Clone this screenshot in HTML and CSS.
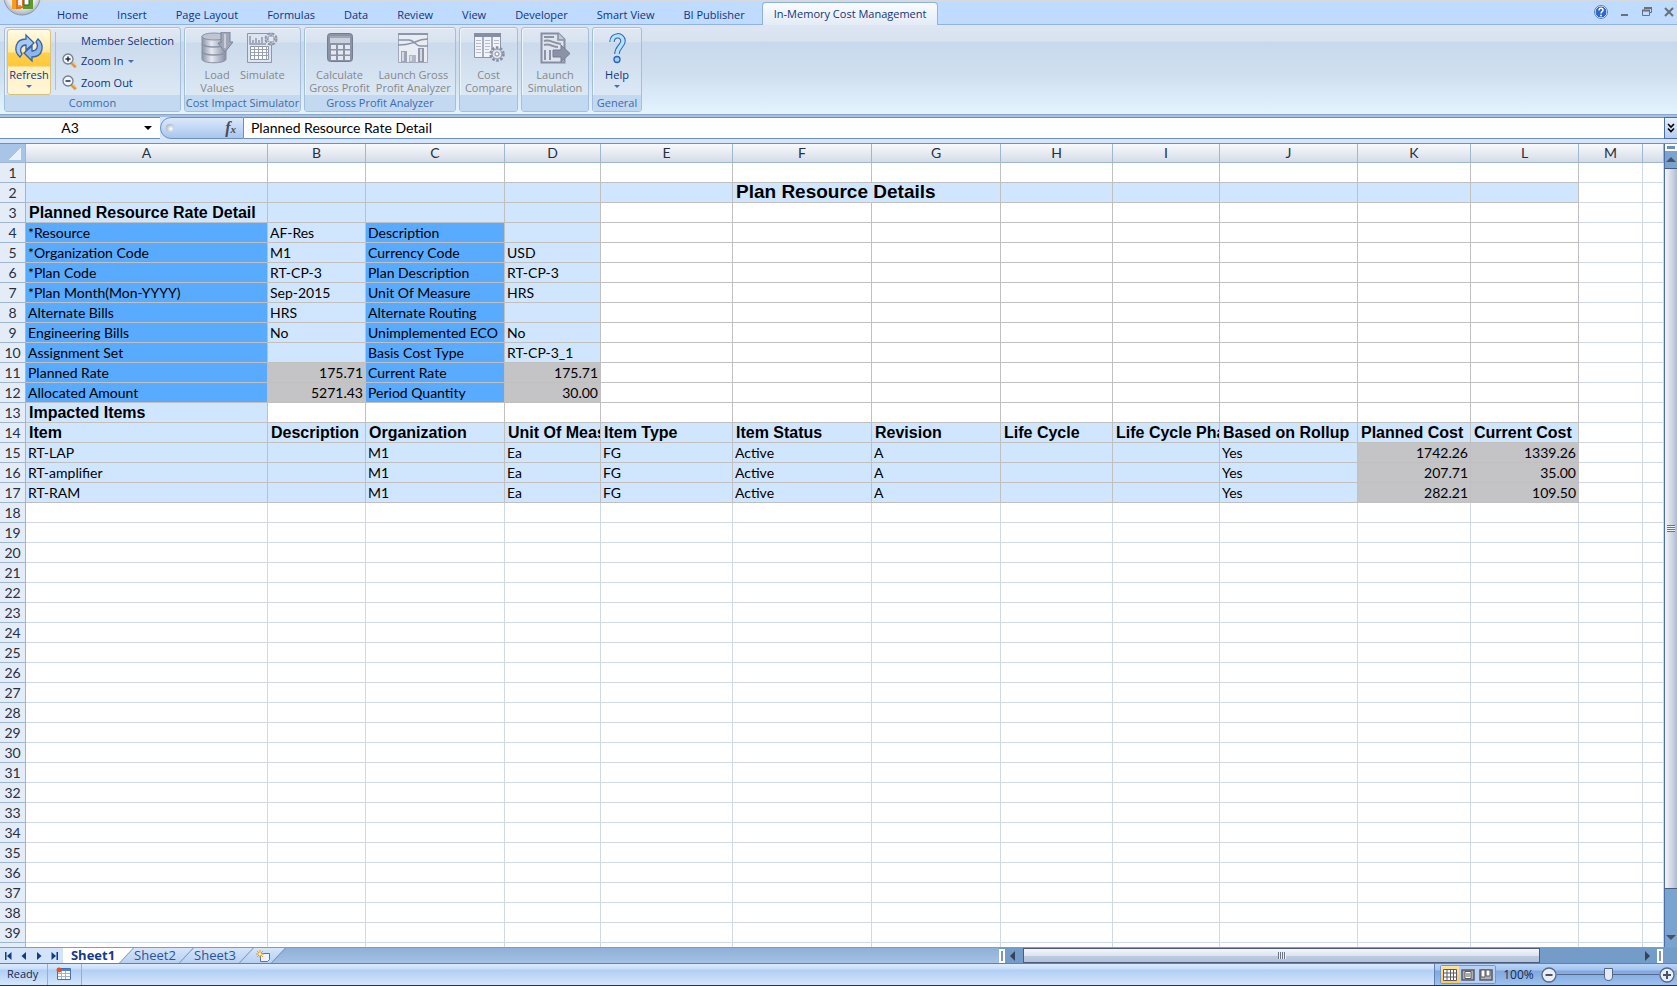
FILE: index.html
```html
<!DOCTYPE html>
<html lang="en">
<head>
  <meta charset="UTF-8">
  <title>Plan Resource Details</title>
  <link rel="stylesheet" href="styles.css">
</head>
<body>
  <header class="tab-bar">
    <button class="office-btn" aria-label="Office Button">
      <svg width="38" height="38" viewBox="0 0 38 38">
        <defs>
          <radialGradient id="orb" cx="50%" cy="40%" r="60%">
            <stop offset="0" stop-color="#fff"/>
            <stop offset="0.7" stop-color="#e4e6ea"/>
            <stop offset="1" stop-color="#a9b1bd"/>
          </radialGradient>
        </defs>
        <circle cx="19" cy="19" r="18" fill="url(#orb)" stroke="#8c97a8"/>
        <path d="M9 15h9v4h-5v8h5v4H9z" fill="#f0a01e"/>
        <path d="M14 22l6-4v11l-6 1z" fill="none" stroke="#e2701c" stroke-width="2"/>
        <path d="M20 15h10v16H20v-4h6v-8h-6z" fill="#5c9a2c"/>
        <path d="M21 21h5v6h-5z" fill="#fff" stroke="#2f5f2a"/>
      </svg>
    </button>
    <nav class="tabs">
      <button>Home</button>
      <button>Insert</button>
      <button>Page Layout</button>
      <button>Formulas</button>
      <button>Data</button>
      <button>Review</button>
      <button>View</button>
      <button>Developer</button>
      <button>Smart View</button>
      <button>BI Publisher</button>
      <button class="active">In-Memory Cost Management</button>
    </nav>
    <div class="window-btns">
      <button aria-label="Help">
        <svg width="14" height="14" viewBox="0 0 14 14">
          <circle cx="7" cy="7" r="6" fill="#2f66c8" stroke="#fff"/>
          <circle cx="7" cy="7" r="6.5" fill="none" stroke="#5f7fb0"/>
          <path d="M5 5.500c0-3 4-2.700 4-.3C9 6.800 7 6.500 7 8.500" fill="none" stroke="#fff" stroke-width="1.500"/>
          <circle cx="7" cy="10.500" r="0.900" fill="#fff"/>
        </svg>
      </button>
      <button aria-label="Minimize">
        <svg width="10" height="10" viewBox="0 0 10 10"><path d="M1 8h7" stroke="#6b6f78" stroke-width="2"/></svg>
      </button>
      <button aria-label="Restore">
        <svg width="10" height="10" viewBox="0 0 10 10">
          <path d="M2.500 2.500V1h7v4.500H8" fill="none" stroke="#6b6f78"/>
          <path d="M.5 3.500h7v5h-7z" fill="none" stroke="#6b6f78"/>
          <path d="M0 3.500h8M2 1h8" stroke="#6b6f78" stroke-width="2"/>
        </svg>
      </button>
      <button aria-label="Close">
        <svg width="10" height="10" viewBox="0 0 10 10"><path d="M1 1l8 8M9 1l-8 8" stroke="#6b6f78" stroke-width="2"/></svg>
      </button>
    </div>
  </header>

  <div class="ribbon">
    <section class="group group-common">
      <div class="tools">
        <button class="big refresh">
          <svg width="32" height="32" viewBox="0 0 32 32">
            <path d="M7 25C0 19 2 7 13 7V3l8 8-8 7v-5c-5 0-7 5-4 9z" fill="#a9c9f2" stroke="#3563ad" stroke-width="1.300"/>
            <path d="M25 7c7 6 5 18-6 18v4l-8-8 8-7v5c5 0 7-5 4-9z" fill="#8db6ec" stroke="#3563ad" stroke-width="1.300"/>
          </svg>
          <span>Refresh</span>
          <i class="caret"></i>
        </button>
        <div class="small-tools">
          <button><span class="no-icon"></span>Member Selection</button>
          <button>
            <svg width="16" height="16" viewBox="0 0 16 16">
              <path d="M9 9l5 5" stroke="#e09a34" stroke-width="3.500"/>
              <path d="M9 8l6 5" stroke="#ffe0a0"/>
              <circle cx="6" cy="6" r="5" fill="#f0f6ff" stroke="#76808c" stroke-width="1.300"/>
              <path d="M3.500 6h5M6 3.500v5" stroke="#222b3c" stroke-width="1.500"/>
            </svg>
            Zoom In
            <i class="caret"></i>
          </button>
          <button>
            <svg width="16" height="16" viewBox="0 0 16 16">
              <path d="M9 9l5 5" stroke="#e09a34" stroke-width="3.500"/>
              <path d="M9 8l6 5" stroke="#ffe0a0"/>
              <circle cx="6" cy="6" r="5" fill="#f0f6ff" stroke="#76808c" stroke-width="1.300"/>
              <path d="M3.500 6h5" stroke="#222b3c" stroke-width="1.500"/>
            </svg>
            Zoom Out
          </button>
        </div>
      </div>
      <h2>Common</h2>
    </section>

    <section class="group group-impact">
      <div class="tools">
        <button class="big" disabled>
          <svg width="32" height="32" viewBox="0 0 32 32">
            <defs>
              <linearGradient id="drum">
                <stop offset="0" stop-color="#8b93a6"/>
                <stop offset="0.4" stop-color="#e6e9f0"/>
                <stop offset="1" stop-color="#858da1"/>
              </linearGradient>
            </defs>
            <path d="M1 4v23c0 5 24 5 24 0V4z" fill="url(#drum)" stroke="#8890a2"/>
            <ellipse cx="13" cy="4.500" rx="12" ry="3.500" fill="#bfc5d2" stroke="#8a92a5"/>
            <path d="M1 12c3 4 21 4 24 0M1 20c3 4 21 4 24 0" fill="none" stroke="#8c94a8" stroke-width="1.500"/>
            <path d="M20 0h9v10h3l-8 10-7-9h3z" fill="#a0a7b8" stroke="#7c8498"/>
            <path d="M24 2v14" stroke="#c9ced9" stroke-width="2"/>
          </svg>
          <span>Load<br>Values</span>
        </button>
        <button class="big" disabled>
          <svg width="32" height="32" viewBox="0 0 32 32">
            <path d="M1.500 1.500h24v29h-24z" fill="#dfe5f0" stroke="#8e96aa"/>
            <path d="M4 4v8h16M7 11V8m3 3V6m3 5V8m3 3V5" fill="none" stroke="#8e96aa" stroke-width="1.500"/>
            <path d="M4.500 14.500h18v13h-18z" fill="#fff" stroke="#8e96aa"/>
            <path d="M4 17.500h19M4 20.500h19M4 23.500h19M8.500 14v14m4-14v14m4-14v14m4-14v14" stroke="#9aa1b3"/>
            <circle cx="25" cy="7" r="5.500" fill="#e3e7f0" stroke="#8e96aa" stroke-width="2" stroke-dasharray="3 1.300"/>
            <circle cx="25" cy="7" r="3.500" fill="none" stroke="#8e96aa"/>
            <path d="M25 1v4m0 4v4m-6-6h4m4 0h4" stroke="#8e96aa"/>
          </svg>
          <span>Simulate</span>
        </button>
      </div>
      <h2>Cost Impact Simulator</h2>
    </section>

    <section class="group group-profit">
      <div class="tools">
        <button class="big" disabled>
          <svg width="32" height="32" viewBox="0 0 32 32">
            <rect x="3.500" y="1.500" width="25" height="28" rx="3" fill="#8b93a7" stroke="#747c90"/>
            <path d="M6 4h20v7H6z" fill="#cbd2de"/>
            <path d="M6 5h20" stroke="#747c90"/>
            <path d="M7 13h5v4H7zm7 0h5v4h-5zm7 0h5v4h-5zM7 18.500h5v4H7zm7 0h5v4h-5zm7 0h5v4h-5zM7 24h5v4H7zm7 0h5v4h-5zm7 0h5v4h-5z" fill="#e4e8f0"/>
          </svg>
          <span>Calculate<br>Gross Profit</span>
        </button>
        <button class="big" disabled>
          <svg width="32" height="32" viewBox="0 0 32 32">
            <path d="M1.500 1.500h29v29h-29z" fill="#e8ecf3" stroke="#a2a9ba"/>
            <path d="M1 2h30" stroke="#8e96aa" stroke-width="2"/>
            <path d="M1 8h11c5 0 7 6 11 6h8M1 13c10 0 11-1 17-3 4-2 7-3 13-3" fill="none" stroke="#8b93a7" stroke-width="1.500"/>
            <path d="M4 19h6v11H4z" fill="#9da4b5"/>
            <path d="M12 23h7v7h-7z" fill="#b1b7c6"/>
            <path d="M21 16h6v14h-6z" fill="#8f97aa"/>
            <path d="M5 20h2v9H5zm8 4h2v5h-2zm10-7h2v12h-2z" fill="#d5dae4"/>
          </svg>
          <span>Launch Gross<br>Profit Analyzer</span>
        </button>
      </div>
      <h2>Gross Profit Analyzer</h2>
    </section>

    <section class="group group-compare">
      <div class="tools">
        <button class="big" disabled>
          <svg width="32" height="32" viewBox="0 0 32 32">
            <path d="M1.500 1.500h26v24h-26z" fill="#f2f4f9" stroke="#8e96aa"/>
            <path d="M1 3h27" stroke="#868ea3" stroke-width="4"/>
            <path d="M10 5v20m9-20v20" stroke="#8e96aa" stroke-width="1.500"/>
            <path d="M3 8.500h5m4 0h5m4 0h5M3 11.500h5m4 0h5m4 0h5M3 14.500h5m4 0h5M3 17.500h5m4 0h4M3 20.500h5m4 0h4" stroke="#b6bccb"/>
            <circle cx="24" cy="22" r="6.500" fill="#dde2ec" stroke="#868ea3" stroke-width="2.500" stroke-dasharray="2.500 1.600"/>
            <circle cx="24" cy="22" r="5" fill="#dde2ec" stroke="#868ea3"/>
            <circle cx="24" cy="22" r="2" fill="#fff" stroke="#868ea3"/>
          </svg>
          <span>Cost<br>Compare</span>
        </button>
      </div>
      <h2></h2>
    </section>

    <section class="group group-launch">
      <div class="tools">
        <button class="big" disabled>
          <svg width="32" height="32" viewBox="0 0 32 32">
            <path d="M2.500 1.500h17l6 6v23h-23z" fill="#e0e4ed" stroke="#868ea3" stroke-width="2"/>
            <path d="M19 1v7h7" fill="#c2c8d5" stroke="#868ea3" stroke-width="1.500"/>
            <path d="M5 5h10M5 9c5-2 9 2 17 3M5 13c5-2 9 2 14 2" fill="none" stroke="#8b93a7" stroke-width="2"/>
            <path d="M6 18v10m5-10v10m5-10v3" stroke="#8b93a7" stroke-width="2"/>
            <path d="M14 18h8v-5l9 8.500-9 8.500v-5h-8z" fill="#8b93a7" stroke="#757d92"/>
          </svg>
          <span>Launch<br>Simulation</span>
        </button>
      </div>
      <h2></h2>
    </section>

    <section class="group group-general">
      <div class="tools">
        <button class="big">
          <svg width="32" height="32" viewBox="0 0 32 32">
            <path d="M11 10c0-8 11-8 11-1 0 5-6 6-6 13" fill="none" stroke="#2c62b4" stroke-width="5.500"/>
            <path d="M11 10c0-8 11-8 11-1 0 5-6 6-6 13" fill="none" stroke="#b5e2fb" stroke-width="3.500"/>
            <circle cx="16" cy="27.500" r="3" fill="#9bd2f6" stroke="#2c62b4" stroke-width="1.300"/>
          </svg>
          <span>Help</span>
          <i class="caret"></i>
        </button>
      </div>
      <h2>General</h2>
    </section>
  </div>

  <div class="formula-bar">
    <div class="name-box">
      <input type="text" value="A3" aria-label="Name Box">
      <button aria-label="Name list"><i class="caret"></i></button>
    </div>
    <div class="fx">
      <i class="knob"></i>
      <button aria-label="Insert Function"><em>f</em><sub>x</sub></button>
    </div>
    <input class="formula" type="text" value="Planned Resource Rate Detail" aria-label="Formula">
    <button class="expand" aria-label="Expand Formula Bar">
      <svg width="8" height="10" viewBox="0 0 8 10"><path d="M1 1l3 3 3-3M1 5.500l3 3 3-3" fill="none" stroke="#000" stroke-width="1.600"/></svg>
    </button>
  </div>

  <main class="workbook">
    <div class="grid-wrap">
      <table class="grid">
        <colgroup>
          <col class="col-num"><col class="col-a"><col class="col-b"><col class="col-c"><col class="col-d">
          <col class="col-e"><col class="col-f"><col class="col-g"><col class="col-h"><col class="col-i">
          <col class="col-j"><col class="col-k"><col class="col-l"><col class="col-m"><col>
        </colgroup>
        <thead>
          <tr>
            <th class="corner"></th>
            <th>A</th><th>B</th><th>C</th><th>D</th><th>E</th><th>F</th><th>G</th>
            <th>H</th><th>I</th><th>J</th><th>K</th><th>L</th><th>M</th><th></th>
          </tr>
        </thead>
        <tbody id="rows"></tbody>
      </table>
    </div>
    <div class="vscroll">
      <i class="split"></i>
      <button class="up" aria-label="Scroll up"></button>
      <div class="thumb"><i></i></div>
      <button class="down" aria-label="Scroll down"></button>
    </div>
  </main>

  <div class="sheet-bar">
    <div class="sheet-nav">
      <button aria-label="First sheet"><svg width="8" height="8" viewBox="0 0 8 8"><path d="M1 0h1.500v8H1zM7.500 0v8l-4.500-4z"/></svg></button>
      <button aria-label="Previous sheet"><svg width="8" height="8" viewBox="0 0 8 8"><path d="M6 0v8L1.500 4z"/></svg></button>
      <button aria-label="Next sheet"><svg width="8" height="8" viewBox="0 0 8 8"><path d="M2 0v8l4.500-4z"/></svg></button>
      <button aria-label="Last sheet"><svg width="8" height="8" viewBox="0 0 8 8"><path d="M.5 0v8L5 4zM5.500 0H7v8H5.500z"/></svg></button>
    </div>
    <div class="sheets">
      <button class="active">Sheet1</button>
      <button>Sheet2</button>
      <button>Sheet3</button>
      <button class="new" aria-label="Insert Worksheet">
        <svg width="14" height="12" viewBox="0 0 14 12">
          <path d="M4.500 3.500h9v6l-2 2h-7z" fill="#eef3fb" stroke="#5d7299"/>
          <path d="M4 0v8M0 4h8M1 1l6 6M7 1L1 7" stroke="#f09a1e"/>
          <circle cx="4" cy="4" r="1.500" fill="#fff3c0"/>
        </svg>
      </button>
    </div>
    <div class="hscroll">
      <i class="split"></i>
      <button class="left" aria-label="Scroll left"></button>
      <div class="track"><div class="thumb"><i></i></div></div>
      <button class="right" aria-label="Scroll right"></button>
      <i class="split"></i>
    </div>
  </div>

  <footer class="status-bar">
    <span class="ready">Ready</span>
    <button class="macro" aria-label="Record Macro">
      <svg width="15" height="13" viewBox="0 0 15 13">
        <path d="M1.500 1.500h13v11h-13z" fill="#fff" stroke="#4d6ea8"/>
        <path d="M2 3h12" stroke="#4f7fd0" stroke-width="2"/>
        <path d="M2 6.500h12M2 9.500h12M5.500 4v8m4-8v8" stroke="#9db4da"/>
        <circle cx="3" cy="3" r="2.500" fill="#d8542a"/>
      </svg>
    </button>
    <div class="view-zone">
      <div class="views">
        <button class="active" aria-label="Normal">
          <svg width="14" height="12" viewBox="0 0 14 12"><path d="M.5.5h13v11H.5z" fill="#fff" stroke="#5b5b62"/><path d="M0 4h14M0 8h14M4 0v12m3.500-12v12m3-12v12" stroke="#5b5b62"/></svg>
        </button>
        <button aria-label="Page Layout">
          <svg width="14" height="12" viewBox="0 0 14 12"><path d="M1 1h12v10H1z" fill="#a9b0bc" stroke="#5b5b62" stroke-width="1.500"/><path d="M4 2.500h6v7H4z" fill="#fff" stroke="#5b5b62"/><path d="M5 5h4M5 7h4" stroke="#5b5b62"/></svg>
        </button>
        <button aria-label="Page Break Preview">
          <svg width="14" height="12" viewBox="0 0 14 12"><path d="M1 1h12v10H1z" fill="#a9b0bc" stroke="#5b5b62" stroke-width="1.500"/><path d="M2 1h4v7H2zm5 0h4v6H7z" fill="#fff" stroke="#5b5b62"/></svg>
        </button>
      </div>
      <span class="percent">100%</span>
      <button class="round" aria-label="Zoom Out"><svg width="16" height="16" viewBox="0 0 16 16"><circle cx="8" cy="8" r="7" fill="#e9eef6" stroke="#56688a" stroke-width="1.300"/><path d="M4.500 8h7" stroke="#4a5468" stroke-width="2"/></svg></button>
      <input type="range" min="0" max="100" value="50" aria-label="Zoom">
      <button class="round" aria-label="Zoom In"><svg width="16" height="16" viewBox="0 0 16 16"><circle cx="8" cy="8" r="7" fill="#e9eef6" stroke="#56688a" stroke-width="1.300"/><path d="M4 8h8M8 4v8" stroke="#4a5468" stroke-width="2"/></svg></button>
    </div>
  </footer>

  <script src="grid.js"></script>
</body>
</html>
```
FILE: styles.css
```css
* {
  box-sizing: border-box;
}

body {
  margin: 0;
  height: 100vh;
  display: flex;
  flex-direction: column;
  overflow: hidden;
  font-family: "Open Sans", "Noto Sans", sans-serif;
  font-size: 11px;
  color: #0f3580;
  background: #bfdbff;
  border-bottom: 1px solid #26344f;
}

button {
  margin: 0;
  padding: 0;
  border: 0;
  background: none;
  font: inherit;
  color: inherit;
}

input {
  margin: 0;
  border: 0;
  outline: 0;
  font: inherit;
  color: #000;
}

svg {
  display: block;
}

.caret {
  border: 3px solid transparent;
  border-top-color: #4a6ea9;
  border-bottom: 0;
}

/* tabs */
.tab-bar {
  flex: none;
  display: flex;
  height: 25px;
  border-top: 1px solid #d6d9de;
  border-bottom: 1px solid #8db2e3;
  background: #bfdbff;
}

.office-btn {
  width: 43px;
  height: 15px;
  display: flex;
  align-items: flex-end;
  justify-content: center;
}

.tabs {
  flex: 1;
  display: flex;
  gap: 1px;
}

.tabs button {
  height: 24px;
  padding: 2px 13px 0;
  border: 1px solid transparent;
  border-bottom: 0;
  line-height: 20px;
  white-space: nowrap;
}

.tabs .active {
  padding: 0 11px;
  height: 23px;
  margin: 1px 0 -1px 2px;
  border-color: #8db2e3;
  border-radius: 4px 4px 0 0;
  background: linear-gradient(#fafcff, #e3ebf6);
}

.window-btns {
  display: flex;
  align-items: center;
  gap: 12px;
  padding: 0 3px 2px 0;
}

/* ribbon */
.ribbon {
  flex: none;
  display: flex;
  gap: 3px;
  height: 90px;
  padding: 2px 4px;
  border-bottom: 1px solid #8ba5c9;
  background: linear-gradient(#dde6f2 0, #d8e2f0 16px, #c8d9ed 17px, #cfdfef 50px, #e3f4ff 100%);
}

.group {
  display: flex;
  flex-direction: column;
  border: 1px solid #a4bfdd;
  border-radius: 3px;
  background: linear-gradient(#e0e8f2 0, #d9e3f0 14px, #cbdaec 15px, #dce8f4 68px);
  box-shadow: inset 1px 1px 0 #eef4fb;
}

.group-common {
  width: 177px;
}

.group-impact {
  width: 117px;
}

.group-profit {
  width: 152px;
}

.group-compare {
  width: 59px;
}

.group-launch {
  width: 68px;
}

.group-general {
  width: 50px;
}

.group h2 {
  height: 16px;
  margin: 0;
  font-size: 11px;
  font-weight: normal;
  line-height: 16px;
  text-align: center;
  white-space: nowrap;
  color: #3e6aaa;
  background: #c2d9f1;
  border-radius: 0 0 2px 2px;
}

.tools {
  flex: 1;
  display: flex;
  justify-content: center;
  min-height: 0;
}

.group-common .tools {
  justify-content: flex-start;
  padding: 1px 2px;
}

.group-profit .tools {
  gap: 6px;
}

.group-impact .tools {
  gap: 6px;
}

.big {
  display: flex;
  flex-direction: column;
  align-items: center;
  padding-top: 4px;
  line-height: 13px;
  white-space: nowrap;
}

.big span {
  margin-top: 4px;
}

.big .caret {
  margin-top: 4px;
}

.big:disabled {
  color: #86888c;
}

.refresh {
  width: 44px;
  height: 66px;
  padding-top: 2px;
  border: 1px solid #dbc27a;
  border-radius: 3px;
  background: linear-gradient(#fffbe6 0, #ffe9a0 22px, #ffd049 23px, #ffc83c 36px, #fdf0c4 37px, #fff6d8 100%);
}

.small-tools {
  display: flex;
  flex-direction: column;
  height: 58px;
  margin: 3px 0 0 4px;
  padding-left: 6px;
  border-left: 1px solid #a9c0dc;
  line-height: 16px;
}

.small-tools button {
  display: flex;
  align-items: center;
  gap: 3px;
  flex: 0 0 22px;
  white-space: nowrap;
}

.small-tools button:first-child {
  flex-basis: 18px;
}

.small-tools .caret {
  margin-left: 2px;
}

.no-icon {
  width: 16px;
}

/* formula bar */
.formula-bar {
  flex: none;
  display: flex;
  height: 28px;
  padding: 2px 0 4px;
  background: linear-gradient(#a5c0e2 0, #a5c0e2 2px, #d6e6fa 2px);
  font-family: Lato, sans-serif;
  font-size: 14px;
}

.name-box {
  display: flex;
  width: 160px;
  border: solid #6d8fbd;
  border-width: 1px 0;
  background: #fff;
}

.name-box input {
  flex: 1;
  min-width: 0;
  padding: 0 4px 2px 0;
  text-align: center;
}

.name-box button {
  display: flex;
  align-items: center;
  width: 16px;
}

.name-box .caret {
  border-width: 4px;
  border-bottom: 0;
  border-top-color: #000;
}

.fx {
  display: flex;
  align-items: center;
  justify-content: space-between;
  width: 84px;
  padding: 0 7px 0 5px;
  border: 1px solid #6d8fbd;
  border-radius: 11px 0 0 11px;
  background: linear-gradient(#dbe9fb, #a9c6ee);
}

.knob {
  width: 8px;
  height: 8px;
  border-radius: 50%;
  background: radial-gradient(circle at 60% 60%, #fff, #8f9db8);
}

.fx button {
  font-family: "Liberation Serif", serif;
  font-size: 16px;
  font-weight: bold;
  font-style: italic;
  line-height: 16px;
  color: #444b59;
}

.fx sub {
  font-size: 11px;
  vertical-align: baseline;
}

.formula {
  flex: 1;
  padding: 0 7px 2px;
  border: solid #6d8fbd;
  border-width: 1px 0;
}

.expand {
  display: flex;
  align-items: center;
  justify-content: center;
  width: 13px;
  border: 1px solid #4a6ea9;
  border-right: 0;
  background: linear-gradient(#e7f0fc, #b5cdef);
}

/* grid */
.workbook {
  flex: 1;
  min-height: 0;
  display: flex;
  border-top: 1px solid #6d8fbd;
}

.grid-wrap {
  flex: 1;
  overflow: hidden;
  background: #fff;
}

.grid {
  width: 100%;
  table-layout: fixed;
  border-collapse: separate;
  border-spacing: 0;
  font-family: Lato, sans-serif;
  font-size: 14px;
  line-height: 18px;
  color: #000;
}

.col-num { width: 26px; }
.col-a { width: 242px; }
.col-b { width: 98px; }
.col-c { width: 139px; }
.col-d { width: 96px; }
.col-e { width: 132px; }
.col-f { width: 139px; }
.col-g { width: 129px; }
.col-h { width: 112px; }
.col-i { width: 107px; }
.col-j { width: 138px; }
.col-k { width: 113px; }
.col-l { width: 108px; }
.col-m { width: 64px; }

.grid th,
.grid td {
  height: 20px;
  padding: 1px 2px 0;
  border: solid #d0d7e5;
  border-width: 0 1px 1px 0;
  overflow: hidden;
  white-space: nowrap;
}

.grid th {
  padding: 0;
  border-color: #9eb6ce;
  font-weight: normal;
  color: #27303f;
  background: #e4ecf7;
}

.grid thead th {
  height: 19px;
  background: linear-gradient(#f8fafd, #d5dbe7);
}

.grid thead .corner {
  background: linear-gradient(135deg, transparent 0, transparent 50%, #e8f0fa 50%) 8px 4px / 13px 12px no-repeat, #a9c4e9;
}

.grid td.framed {
  border-color: #c0c0c0;
}

.grid td.value {
  background: #d0e6ff;
}

.grid td.label {
  background: #59abff;
}

.grid td.calc {
  background: #c4c4c6;
  text-align: right;
}

.grid td.head,
.grid td.title {
  padding: 0 3px;
  background: #d0e6ff;
  font-family: "Liberation Sans", Arial, sans-serif;
  font-size: 16px;
  font-weight: bold;
}

.grid td.title {
  padding-bottom: 2px;
  font-size: 19px;
  line-height: 17px;
}

/* scroll bars */
.vscroll {
  flex: none;
  display: flex;
  flex-direction: column;
  align-items: center;
  width: 13px;
  border-left: 1px solid #4a6ea9;
  background: #7ba3cf;
  overflow: hidden;
}

.vscroll .split {
  width: 12px;
  height: 7px;
  border: 2px solid #fff;
  background: #6d8fbd;
}

.up,
.down {
  flex: none;
  border: 5px solid transparent;
}

.up {
  height: 11px;
  margin-bottom: 6px;
  border-top-width: 6px;
  border-bottom-color: #44546e;
}

.vscroll .thumb {
  flex: 1;
  display: flex;
  align-items: center;
  justify-content: center;
  width: 12px;
  border: solid #4a5c80;
  border-width: 1px 0;
  background: linear-gradient(90deg, #f4f6fa, #cdd4e0 60%, #a9bbd6);
}

.vscroll .thumb i {
  width: 8px;
  height: 7px;
  background: repeating-linear-gradient(#6b7488 0, #6b7488 1px, #eef1f6 1px, #eef1f6 2px);
}

.down {
  margin: 46px 0 7px;
  border-top-color: #44546e;
  border-bottom: 0;
}

.sheet-bar {
  flex: none;
  display: flex;
  height: 17px;
  border-top: 1px solid #7d9dc8;
  border-bottom: 1px solid #5f82b5;
  background: linear-gradient(#8fb0d8, #a5c1e4);
}

.sheet-nav {
  position: relative;
  z-index: 2;
  display: flex;
  align-items: center;
  justify-content: space-around;
  width: 63px;
  fill: #123a8c;
  background: #d3e3f8;
}

.sheets {
  display: flex;
  flex: 1;
}

.sheets button {
  position: relative;
  z-index: 0;
  width: 60px;
  padding-right: 4px;
  line-height: 15px;
  font-size: 13px;
  color: #2c5399;
}

/* slanted right edge */
.sheets button::before {
  content: "";
  position: absolute;
  z-index: -1;
  inset: 0;
  border-right: 1px solid #6d8fbd;
  background: linear-gradient(#d6e5f9, #b7d0f2);
  transform: skewX(-43deg);
}

.sheets .active {
  z-index: 1;
  width: 64px;
  font-weight: bold;
  color: #123a8c;
}

.sheets .active::before {
  background: #fff;
  box-shadow: -7px 0 0 #fff;
}

.sheets .new {
  display: flex;
  align-items: center;
  justify-content: center;
  width: 32px;
  padding: 0;
}

.hscroll {
  flex: 0 0 678px;
  display: flex;
  align-items: center;
  padding-right: 14px;
  background: #739cc8;
}

.hscroll .split {
  width: 6px;
  height: 14px;
  border: 2px solid #fff;
  background: #7d95bd;
}

.left,
.right {
  border: 5px solid transparent;
}

.left {
  border-right-color: #34425c;
  border-left: 0;
  margin: 0 8px 0 5px;
}

.right {
  border-left-color: #34425c;
  border-right: 0;
  margin: 0 7px 0 6px;
}

.track {
  flex: 1;
  height: 15px;
}

.hscroll .thumb {
  display: flex;
  align-items: center;
  justify-content: center;
  width: 84%;
  height: 15px;
  border: 1px solid #4a5c80;
  background: linear-gradient(#f4f6fa, #dfe4ec 50%, #bccbe0 55%, #b5c2d8);
}

.hscroll .thumb i {
  width: 8px;
  height: 7px;
  background: repeating-linear-gradient(90deg, #6b7488 0, #6b7488 1px, #eef1f6 1px, #eef1f6 2px);
}

/* status bar */
.status-bar {
  flex: none;
  display: flex;
  height: 21px;
  color: #14284f;
  background: linear-gradient(#dceafd 0, #c9def9 5px, #b0cef5 6px, #d7e6fa 100%);
}

.ready {
  width: 48px;
  padding-left: 7px;
  border-right: 1px solid #8fb0dc;
  line-height: 19px;
}

.macro {
  display: flex;
  align-items: center;
  width: 34px;
  padding: 0 0 3px 8px;
  border-right: 1px solid #8fb0dc;
}

.view-zone {
  display: flex;
  align-items: center;
  width: 243px;
  margin-left: auto;
  padding: 0 2px 0 5px;
  border-left: 1px solid #5f82b5;
  background: linear-gradient(#bcd5f7 0, #a3c4f0 6px, #7fa8df 7px, #9fc2ee 100%);
}

.views {
  display: flex;
  border: 1px solid #7896c4;
  border-radius: 2px;
}

.views button {
  display: flex;
  align-items: center;
  justify-content: center;
  width: 18px;
  height: 17px;
  background: #b7d0f3;
}

.views .active {
  background: linear-gradient(#fbe3a8, #ffc95c);
}

.percent {
  width: 45px;
  font-size: 12px;
  text-align: center;
}

.view-zone input {
  flex: 1;
  min-width: 0;
  height: 16px;
  appearance: none;
  background: linear-gradient(#56688a, #56688a) center / 100% 1px no-repeat;
}

.view-zone input::-webkit-slider-thumb {
  appearance: none;
  width: 9px;
  height: 13px;
  border: 1px solid #56688a;
  border-radius: 1px 1px 5px 5px;
  background: #e3eaf5;
}
```
FILE: grid.js
```js
const COLS = 'ABCDEFGHIJKLM'.split('');
const FRAMED = 'ABCDEFGHIJKL';
const LAST_ROW = 39;

// row number -> column letter -> [kind, text]
const cells = {};

function put(row, col, kind, text) {
  cells[row] = cells[row] || {};
  cells[row][col] = [kind, text || ''];
}

FRAMED.split('').forEach(col => put(2, col, 'value'));
put(2, 'F', 'title', 'Plan Resource Details');

put(3, 'A', 'head', 'Planned Resource Rate Detail');
['B', 'C', 'D'].forEach(col => put(3, col, 'value'));

const details = [
  ['*Resource', 'AF-Res', 'Description', ''],
  ['*Organization Code', 'M1', 'Currency Code', 'USD'],
  ['*Plan Code', 'RT-CP-3', 'Plan Description', 'RT-CP-3'],
  ['*Plan Month(Mon-YYYY)', 'Sep-2015', 'Unit Of Measure', 'HRS'],
  ['Alternate Bills', 'HRS', 'Alternate Routing', ''],
  ['Engineering Bills', 'No', 'Unimplemented ECO', 'No'],
  ['Assignment Set', '', 'Basis Cost Type', 'RT-CP-3_1'],
  ['Planned Rate', '175.71', 'Current Rate', '175.71'],
  ['Allocated Amount', '5271.43', 'Period Quantity', '30.00']
];
details.forEach((d, i) => {
  const kind = i > 6 ? 'calc' : 'value';
  put(i + 4, 'A', 'label', d[0]);
  put(i + 4, 'B', kind, d[1]);
  put(i + 4, 'C', 'label', d[2]);
  put(i + 4, 'D', kind, d[3]);
});

put(13, 'A', 'head', 'Impacted Items');

const heads = ['Item', 'Description', 'Organization', 'Unit Of Measure', 'Item Type', 'Item Status',
  'Revision', 'Life Cycle', 'Life Cycle Phase', 'Based on Rollup', 'Planned Cost', 'Current Cost'];
heads.forEach((text, i) => put(14, COLS[i], 'head', text));

const items = [
  ['RT-LAP', '', 'M1', 'Ea', 'FG', 'Active', 'A', '', '', 'Yes', '1742.26', '1339.26'],
  ['RT-amplifier', '', 'M1', 'Ea', 'FG', 'Active', 'A', '', '', 'Yes', '207.71', '35.00'],
  ['RT-RAM', '', 'M1', 'Ea', 'FG', 'Active', 'A', '', '', 'Yes', '282.21', '109.50']
];
items.forEach((item, r) => {
  item.forEach((text, i) => put(r + 15, COLS[i], i > 9 ? 'calc' : 'value', text));
});

const body = document.getElementById('rows');
for (let row = 1; row <= LAST_ROW + 1; row++) {
  const tr = body.insertRow();
  const th = document.createElement('th');
  th.textContent = row <= LAST_ROW ? row : '';
  tr.appendChild(th);

  for (const col of COLS) {
    // the title in F2 runs over G2
    if (row === 2 && col === 'G') continue;
    const td = tr.insertCell();
    const cell = cells[row] && cells[row][col];
    if (row <= 17 && FRAMED.includes(col)) td.classList.add('framed');
    if (cell) {
      td.classList.add(cell[0]);
      td.textContent = cell[1];
      if (cell[0] === 'title') td.colSpan = 2;
    }
  }
  tr.insertCell();
}
```
